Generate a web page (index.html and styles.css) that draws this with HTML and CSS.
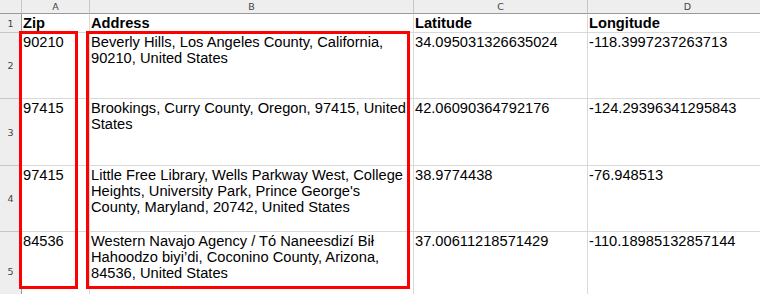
FILE: index.html
```html
<!DOCTYPE html>
<html>
<head>
<meta charset="utf-8">
<link rel="stylesheet" href="styles.css">
</head>
<body>
<div class="sheet">
  <div class="corner"></div>
  <div class="colhead">A</div>
  <div class="colhead">B</div>
  <div class="colhead">C</div>
  <div class="colhead last">D</div>

  <div class="rowhead">1</div>
  <div class="cell bold">Zip</div>
  <div class="cell bold">Address</div>
  <div class="cell bold">Latitude</div>
  <div class="cell bold last">Longitude</div>

  <div class="rowhead">2</div>
  <div class="cell">90210</div>
  <div class="cell">Beverly Hills, Los Angeles County, California, 90210, United States</div>
  <div class="cell">34.095031326635024</div>
  <div class="cell last">-118.3997237263713</div>

  <div class="rowhead">3</div>
  <div class="cell">97415</div>
  <div class="cell">Brookings, Curry County, Oregon, 97415, United States</div>
  <div class="cell">42.06090364792176</div>
  <div class="cell last">-124.29396341295843</div>

  <div class="rowhead">4</div>
  <div class="cell">97415</div>
  <div class="cell">Little Free Library, Wells Parkway West, College Heights, University Park, Prince George's County, Maryland, 20742, United States</div>
  <div class="cell">38.9774438</div>
  <div class="cell last">-76.948513</div>

  <div class="rowhead">5</div>
  <div class="cell">84536</div>
  <div class="cell">Western Navajo Agency / Tó Naneesdizí Bił Hahoodzo biyi’di, Coconino County, Arizona, 84536, United States</div>
  <div class="cell">37.00611218571429</div>
  <div class="cell last">-110.18985132857144</div>

  <div class="highlight hl-a"></div>
  <div class="highlight hl-b"></div>
</div>
</body>
</html>
```

FILE: styles.css
```css
html, body {
  margin: 0;
  padding: 0;
  background: #ffffff;
}

.sheet {
  position: relative;
  width: 760px;
  height: 294px;
  overflow: hidden;
  display: grid;
  grid-template-columns: 22px 68px 324px 174px 200px;
  grid-template-rows: 14px 19px 66px 67px 66px 80px;
  font-family: "Liberation Sans", Arial, sans-serif;
  color: #000;
}

.corner,
.colhead,
.rowhead {
  background: #eeeeee;
  color: #444;
  font-family: "DejaVu Sans", "Liberation Sans", sans-serif;
  font-size: 9.5px;
  box-sizing: border-box;
}

.corner {
  border-right: 1px solid #c6c6c6;
  border-bottom: 1px solid #9a9a9a;
}

.colhead {
  border-right: 1px solid #c6c6c6;
  border-bottom: 1px solid #9a9a9a;
  display: flex;
  align-items: center;
  justify-content: center;
  line-height: 13px;
}

.rowhead {
  border-right: 1px solid #9a9a9a;
  border-bottom: 1px solid #c6c6c6;
  display: flex;
  align-items: center;
  justify-content: center;
}

.cell {
  box-sizing: border-box;
  border-right: 1px solid #d9d9d9;
  border-bottom: 1px solid #d9d9d9;
  font-size: 14.67px;
  line-height: 16px;
  padding: 1px 2px 0 1px;
  overflow: hidden;
}

.cell.bold {
  font-weight: bold;
  padding-top: 1px;
}

.highlight {
  position: absolute;
  top: 31px;
  height: 258px;
  box-sizing: border-box;
  border: 3px solid #ff0000;
}

.hl-a {
  left: 19px;
  width: 59px;
}

.hl-b {
  left: 86px;
  width: 324px;
}
```
